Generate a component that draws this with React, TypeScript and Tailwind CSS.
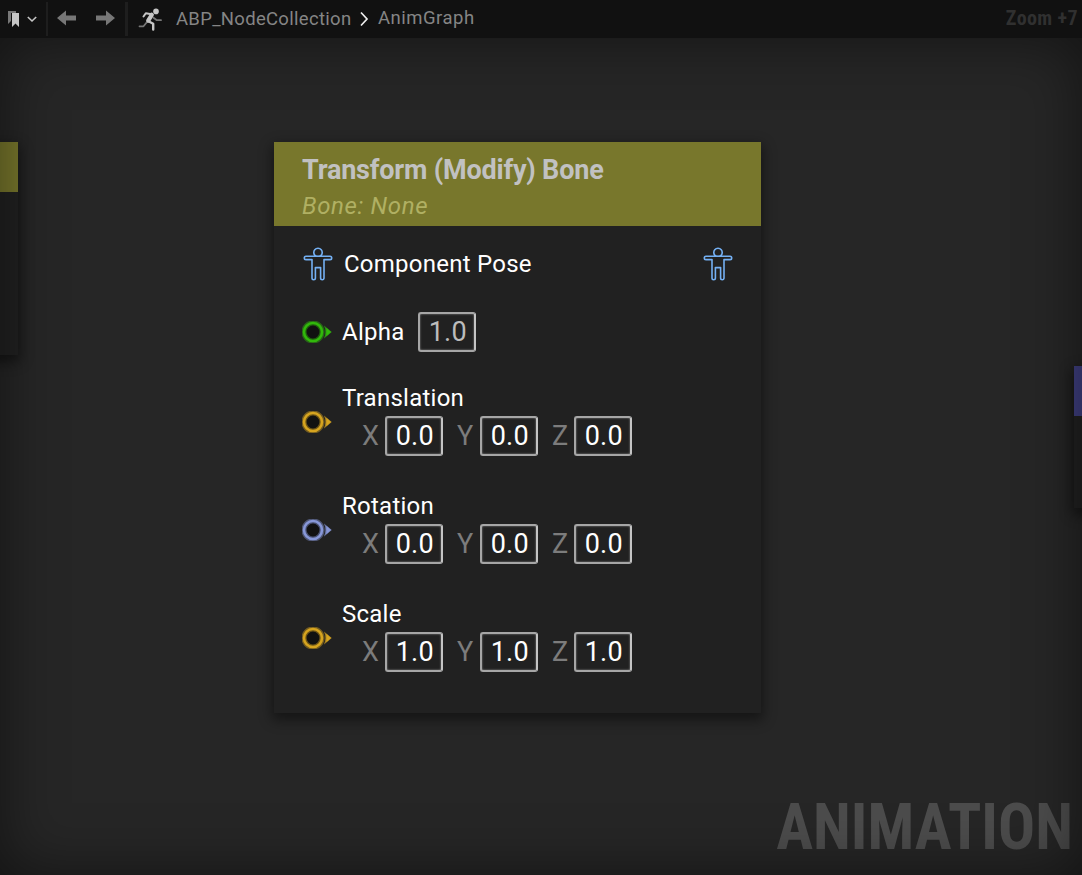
import React from "react";

const PIN_COLORS = {
  green: "#31b80b",
  yellow: "#d6a41f",
  blue: "#8797d8",
} as const;

type PinColor = keyof typeof PIN_COLORS;

function Pin({ color }: { color: PinColor }) {
  const c = PIN_COLORS[color];
  return (
    <svg width="30" height="22" viewBox="0 0 30 22" className="block shrink-0">
      <circle cx="11" cy="11" r="9" fill="#111111" stroke={c} strokeOpacity="0.45" strokeWidth="5.2" />
      <circle cx="11" cy="11" r="9" fill="none" stroke={c} strokeWidth="2.6" />
      <path d="M22 4.6 L29.8 11 L22 17.4 Q24.8 11 22 4.6Z" fill={c} fillOpacity="0.7" />
      <path d="M24.3 6.8 L29 11 L24.3 15.2Z" fill={c} />
    </svg>
  );
}

function PoseIcon() {
  return (
    <svg width="30" height="34" viewBox="0 0 30 34" fill="none" stroke="#74b0f3" strokeWidth="1.6" strokeLinejoin="round" className="block shrink-0">
      <path d="M13 9.2 A4.2 4.2 0 1 1 17 9.2 H27 A1.6 1.6 0 0 1 27 12.6 H21 V31 A1.6 1.6 0 0 1 17.6 31 V20.6 H12.4 V31 A1.6 1.6 0 0 1 9 31 V12.6 H3 A1.6 1.6 0 0 1 3 9.2 Z" />
      <path d="M13 9.2 H17" />
    </svg>
  );
}

function ValueBox({ value, dim = false }: { value: string; dim?: boolean }) {
  return (
    <div
      className={
        "flex h-10 w-[58px] shrink-0 items-center justify-center rounded-[3px] border-2 border-[#a6a6a6] border-r-[#c4c4c4] pl-[1.5px] text-[27px] leading-none tracking-[0.2px] shadow-[inset_0_0_2px_#9a9a9a] " +
        (dim ? "text-[#bcbcbc]" : "text-white")
      }
    >
      {value}
    </div>
  );
}

function VectorRow({ label, color, value }: { label: string; color: PinColor; value: string }) {
  return (
    <div className="flex h-[108px] pl-7">
      <div className="pt-[27px]">
        <Pin color={color} />
      </div>
      <div className="pl-[10px]">
        <div className="h-8 text-2xl leading-7 tracking-[0.25px] text-white">{label}</div>
        <div className="flex items-center pl-5 text-[27px] leading-none text-[#7c7c7c]">
          <span className="w-[23px]">X</span>
          <ValueBox value={value} />
          <span className="w-[37px] pl-[14px]">Y</span>
          <ValueBox value={value} />
          <span className="w-9 pl-[14px]">Z</span>
          <ValueBox value={value} />
        </div>
      </div>
    </div>
  );
}

function TransformNode() {
  return (
    <section className="absolute left-[274px] top-[104px] h-[571px] w-[487px] bg-[#212121] shadow-[0_5px_12px_2px_rgba(0,0,0,0.45)]">
      <header className="h-[84px] bg-[#78772c] pl-7 pt-[10px]">
        <h1 className="h-9 text-[27px] font-bold leading-9 tracking-[-0.19px] text-[#c1c1c1]">Transform (Modify) Bone</h1>
        <p className="h-9 text-2xl italic leading-9 tracking-[0.65px] text-[#b0b063]">Bone: None</p>
      </header>
      <div className="flex h-[76px] items-center justify-between pl-[29px] pr-7">
        <div className="flex items-center gap-[11px]">
          <PoseIcon />
          <span className="text-2xl leading-7 tracking-[0.25px] text-white">Component Pose</span>
        </div>
        <PoseIcon />
      </div>
      <div className="flex h-[82px] items-start pl-7 pt-[10px]">
        <div className="flex h-10 items-center">
          <Pin color="green" />
          <span className="w-[86px] pl-[10px] text-2xl leading-7 tracking-[0.25px] text-white">Alpha</span>
          <ValueBox value="1.0" dim />
        </div>
      </div>
      <VectorRow label="Translation" color="yellow" value="0.0" />
      <VectorRow label="Rotation" color="blue" value="0.0" />
      <VectorRow label="Scale" color="yellow" value="1.0" />
    </section>
  );
}

function Toolbar() {
  return (
    <nav className="flex h-[38px] shrink-0 items-center bg-[#111111] text-[#858585]">
      <svg width="48" height="38" viewBox="0 0 48 38" className="block shrink-0">
        <path d="M8 11H16V13H11V21L8 24Z" fill="#777777" />
        <path d="M12 13H19V27L15.5 23.5L12 27Z" fill="#c6c6c6" />
        <path d="M27.8 17L32 21L36.2 17" fill="none" stroke="#c6c6c6" strokeWidth="1.6" />
        <path d="M47.5 2V36" stroke="#1e1e1e" strokeWidth="3" />
      </svg>
      <svg width="80" height="38" viewBox="0 0 80 38" className="block shrink-0">
        <path d="M9 18L18 10.5V15.5H28V20.5H18V25.5Z" fill="#777777" />
        <path d="M67 18L58 10.5V15.5H48V20.5H58V25.5Z" fill="#777777" />
        <path d="M78.5 2V36" stroke="#1e1e1e" strokeWidth="3" />
      </svg>
      <svg width="48" height="38" viewBox="0 0 48 38" fill="none" strokeLinecap="round" strokeLinejoin="round" className="block shrink-0">
        <circle cx="28" cy="11.4" r="2.8" fill="#c6c6c6" />
        <path d="M11.5 26.3H15.5L19 22" stroke="#777777" strokeWidth="1.8" />
        <path d="M25.5 17.8L28.5 20L33 20.2" stroke="#777777" strokeWidth="1.8" />
        <path d="M15.5 16.5L17.8 13.2L23.5 14.2" stroke="#c6c6c6" strokeWidth="2" />
        <path d="M23.8 14.8L20.2 20.6" stroke="#c6c6c6" strokeWidth="4.2" />
        <path d="M20.5 21.2L25.2 23.8V29.5" stroke="#c6c6c6" strokeWidth="2.4" />
      </svg>
      <span className="w-[183px] text-[18.5px] leading-9 tracking-[0.3px]">ABP_NodeCollection</span>
      <svg width="19" height="38" viewBox="0 0 19 38" className="block shrink-0">
        <path d="M2 12.5L8 19L2 25.5" fill="none" stroke="#eeeeee" strokeWidth="1.7" />
      </svg>
      <span className="pb-[2px] text-[18.5px] leading-9 tracking-[0.5px]">AnimGraph</span>
      <span className="ml-auto pb-[2px] pr-1 font-['Roboto_Condensed',Roboto,sans-serif] text-xl font-bold leading-9 tracking-[0.4px] text-[#303030] [font-stretch:75%]">
        Zoom +7
      </span>
    </nav>
  );
}

export default function App() {
  return (
    <div className="flex h-[875px] w-[1082px] flex-col overflow-hidden bg-[#262626] font-[Roboto,sans-serif]">
      <Toolbar />
      <main className="relative flex-1 overflow-hidden">
        <div className="absolute -left-10 top-[104px] h-[213px] w-[58px] bg-[#212121] shadow-[0_5px_12px_2px_rgba(0,0,0,0.45)]">
          <div className="h-[50px] bg-[#78772c]" />
        </div>
        <div className="absolute left-[1074px] top-[328px] h-[142px] w-[50px] bg-[#212121] shadow-[0_5px_12px_2px_rgba(0,0,0,0.45)]">
          <div className="h-[50px] bg-[#3f3f80]" />
        </div>
        <TransformNode />
        <div className="absolute bottom-[5px] right-[9px] origin-right scale-x-[0.948] font-['Roboto_Condensed',Roboto,sans-serif] text-[65px] font-bold leading-[86px] text-[#4c4c4c] [font-stretch:75%]">
          ANIMATION
        </div>
        <div className="pointer-events-none absolute inset-0 shadow-[inset_0_0_60px_rgba(0,0,0,0.5)]" />
      </main>
    </div>
  );
}
